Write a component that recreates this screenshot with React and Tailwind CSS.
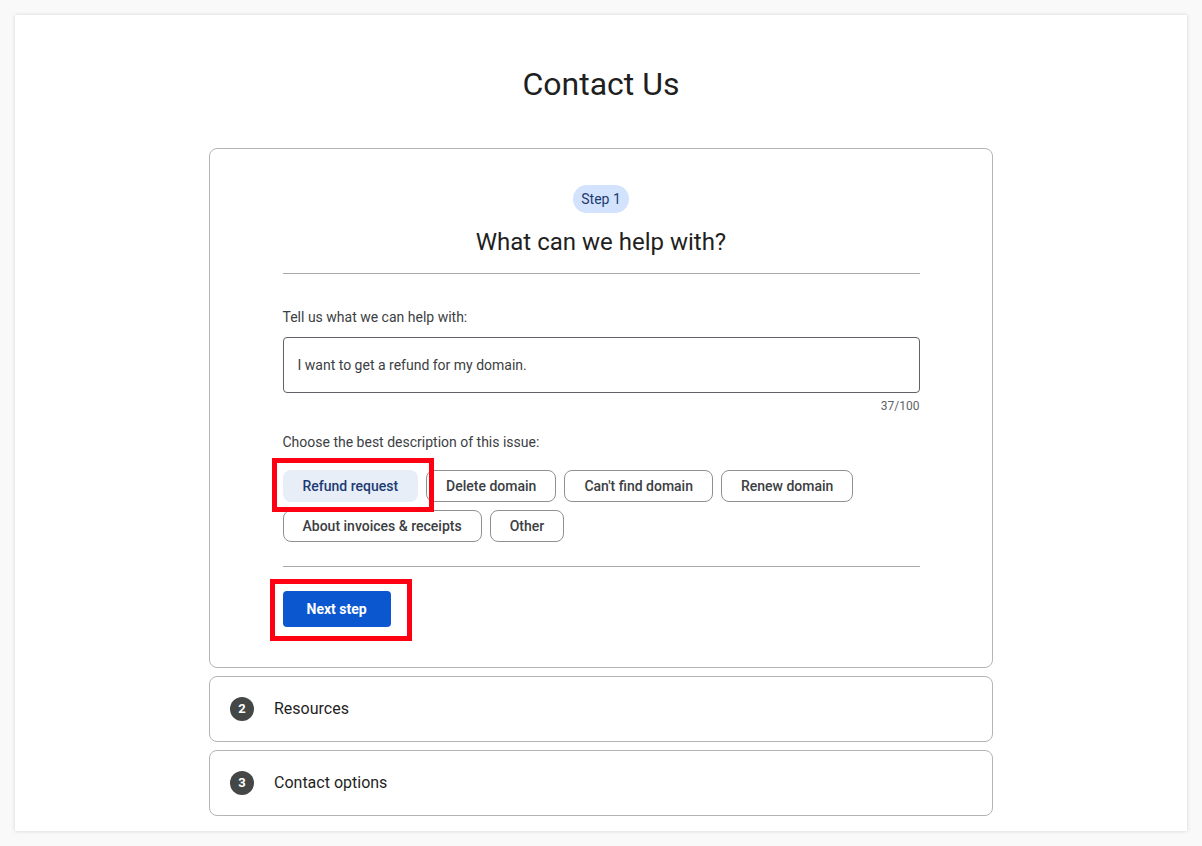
import React from "react";

const chipsRow1 = ["Refund request", "Delete domain", "Can't find domain", "Renew domain"];
const chipsRow2 = ["About invoices & receipts", "Other"];

const Chip = ({ label, selected }) => {
  if (selected) {
    return (
      <div className="relative">
        <button className="h-8 px-5 rounded-lg bg-[#e8eef8] text-[14px] font-medium text-[#1d3b72]">
          {label}
        </button>
        <span className="absolute -left-[11px] -top-[12px] -right-[16px] -bottom-[10px] border-[5px] border-[#ff0012] pointer-events-none" />
      </div>
    );
  }
  return (
    <button className="h-8 px-[19px] rounded-lg border border-[#8e918f] bg-white text-[14px] font-medium text-[#3c4043]">
      {label}
    </button>
  );
};

const StepRow = ({ num, title }) => (
  <div className="h-[66px] rounded-lg border border-[#b4b4b4] flex items-center px-5">
    <span className="w-6 h-6 rounded-full bg-[#444746] text-white text-[13px] font-bold flex items-center justify-center">
      {num}
    </span>
    <span className="ml-5 text-[16px] text-[#1f1f1f]">{title}</span>
  </div>
);

export default function App() {
  return (
    <div
      className="min-h-[846px] bg-[#f9f9f9] p-[15px]"
      style={{ fontFamily: "Roboto, 'Open Sans', sans-serif" }}
    >
      <div className="bg-white h-[816px] shadow-[0_0_4px_rgba(0,0,0,0.15)] pt-[49px]">
        <h1 className="text-center text-[32px] leading-[40px] text-[#1f1f1f]">Contact Us</h1>

        <div className="w-[784px] mx-auto mt-[44px] flex flex-col gap-2">
          <div className="rounded-lg border border-[#b4b4b4] pt-[36px] pb-[40px]">
            <div className="w-[637px] mx-auto">
              <div className="flex justify-center">
                <span className="h-7 px-2 rounded-full bg-[#d3e3fd] text-[14px] text-[#1c3a6e] flex items-center">
                  Step 1
                </span>
              </div>
              <h2 className="text-center text-[24px] leading-[30px] text-[#1f1f1f] mt-[14px]">
                What can we help with?
              </h2>
              <div className="border-t border-[#a8a8a8] mt-[16px]" />

              <p className="text-[14px] text-[#3c4043] mt-[33px] leading-5">Tell us what we can help with:</p>
              <div className="mt-[10px] h-[56px] rounded border border-[#5f6368] flex items-center px-[14px] text-[14px] text-[#3c4043]">
                I want to get a refund for my domain.
              </div>
              <div className="text-right text-[12px] text-[#5f6368] leading-4 mt-[5px]">37/100</div>

              <p className="text-[14px] text-[#3c4043] mt-[18px] leading-5">Choose the best description of this issue:</p>
              <div className="mt-[18px] flex flex-col gap-2">
                <div className="flex gap-2">
                  {chipsRow1.map((c, i) => (
                    <Chip key={c} label={c} selected={i === 0} />
                  ))}
                </div>
                <div className="flex gap-2">
                  {chipsRow2.map((c) => (
                    <Chip key={c} label={c} />
                  ))}
                </div>
              </div>
              <div className="border-t border-[#a8a8a8] mt-[24px]" />

              <div className="mt-[24px] relative w-fit">
                <button className="h-9 px-6 rounded bg-[#0b57d0] text-white text-[14px] font-bold">
                  Next step
                </button>
                <span className="absolute -left-[13px] -top-[12px] -right-[21px] -bottom-[14px] border-[5px] border-[#ff0012] pointer-events-none" />
              </div>
            </div>
          </div>

          <StepRow num="2" title="Resources" />
          <StepRow num="3" title="Contact options" />
        </div>
      </div>
    </div>
  );
}
